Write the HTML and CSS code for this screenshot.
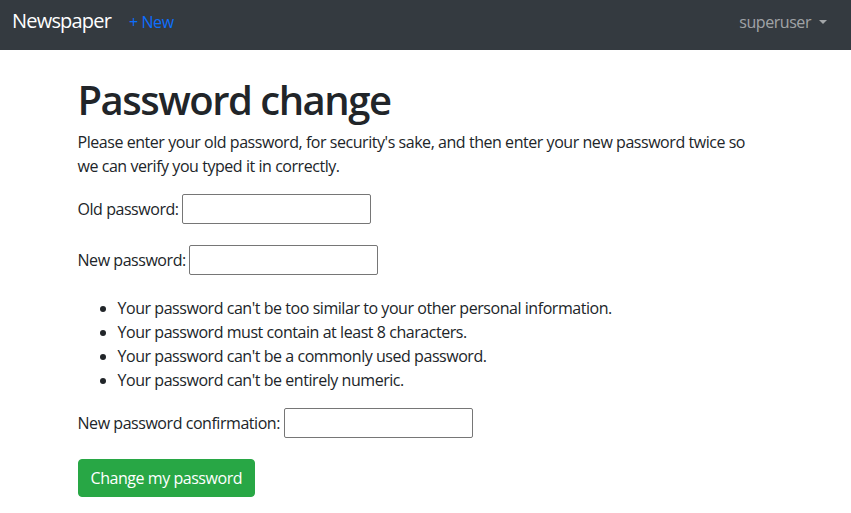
FILE: index.html
```html
<!DOCTYPE html>
<html lang="en">
<head>
<meta charset="utf-8">
<title>Password change</title>
<link rel="stylesheet" href="styles.css">
</head>
<body>
<nav class="navbar">
  <a class="brand" href="#">Newspaper</a>
  <a class="nav-new" href="#">+ New</a>
  <div class="spacer"></div>
  <a class="user" href="#">superuser<span class="caret"></span></a>
</nav>
<main class="container">
  <h1 class="title">Password change</h1>
  <p class="intro">Please enter your old password, for security's sake, and then enter your new password twice so we can verify you typed it in correctly.</p>
  <form class="form">
    <p class="field"><label for="old">Old password:</label> <input class="input" type="password" id="old"></p>
    <p class="field"><label for="new1">New password:</label> <input class="input" type="password" id="new1"></p>
    <ul class="helptext">
      <li>Your password can't be too similar to your other personal information.</li>
      <li>Your password must contain at least 8 characters.</li>
      <li>Your password can't be a commonly used password.</li>
      <li>Your password can't be entirely numeric.</li>
    </ul>
    <p class="field"><label for="new2">New password confirmation:</label> <input class="input" type="password" id="new2"></p>
    <button class="btn-success" type="submit">Change my password</button>
  </form>
</main>
</body>
</html>
```
FILE: styles.css
```css
* { box-sizing: border-box; }
html, body { margin: 0; padding: 0; }
body {
  font-family: "Open Sans", "Noto Sans", sans-serif;
  font-size: 16px;
  line-height: 24px;
  color: #212529;
  background: #fff;
  letter-spacing: -0.45px;
}
a { text-decoration: none; }

.navbar {
  height: 50px;
  background: #343a40;
  display: flex;
  align-items: baseline;
  padding: 6px 12px 0 12px;
}
.brand {
  font-size: 20px;
  line-height: 30px;
  color: #fff;
  letter-spacing: -0.8px;
  margin-right: 18px;
}
.nav-new {
  color: #0d6efd;
}
.spacer { flex: 1; }
.user {
  color: rgba(255, 255, 255, 0.55);
  margin-right: 12px;
}
.caret {
  display: inline-block;
  margin-left: 8px;
  vertical-align: 0.255em;
  width: 0;
  height: 0;
  border-top: 4.8px solid rgba(255, 255, 255, 0.55);
  border-left: 4.8px solid transparent;
  border-right: 4.8px solid transparent;
}

.container {
  width: 720px;
  margin: 0 auto;
  padding: 26px 12px 0 12px;
}
.title {
  font-size: 40px;
  line-height: 48px;
  font-weight: 600;
  letter-spacing: -1.5px;
  margin: 0 0 6px 0;
}
.intro {
  max-width: 680px;
  margin: 0 0 16px 0;
}
.form { margin: 0; }
.field {
  margin: 0 0 16px 0;
  padding-bottom: 5px;
}
.input {
  width: 189px;
  height: 30px;
  border: 1px solid #767676;
  border-radius: 2px;
  padding: 2px 3px;
  font: inherit;
  line-height: 24px;
  vertical-align: baseline;
  background: #fff;
}
.helptext {
  margin: 0 0 16px 0;
  padding-left: 40px;
}
.btn-success {
  font: inherit;
  line-height: 24px;
  letter-spacing: -0.45px;
  color: #fff;
  background: #28a745;
  border: 1px solid #28a745;
  border-radius: 4px;
  padding: 6px 12px;
  margin: 0;
  cursor: pointer;
}
```
